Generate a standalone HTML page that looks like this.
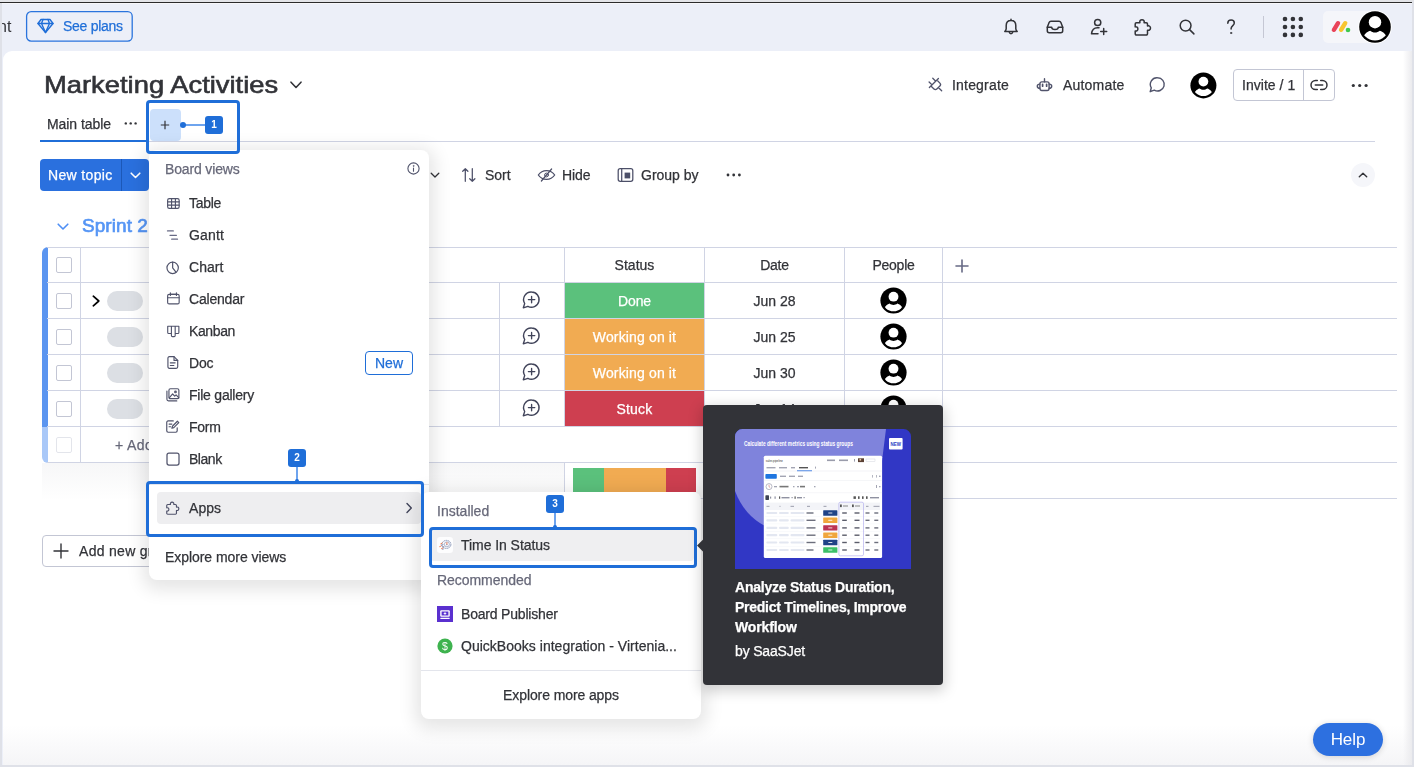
<!DOCTYPE html>
<html lang="en">
<head>
<meta charset="utf-8">
<title>Marketing Activities</title>
<style>
*{box-sizing:border-box;margin:0;padding:0}
html,body{width:1414px;height:767px;overflow:hidden;background:#dfe1e8}
body{position:relative;font-family:"Liberation Sans",sans-serif;font-size:14px;color:#323338;-webkit-font-smoothing:antialiased}
.abs{position:absolute}
.t{position:absolute;white-space:nowrap;line-height:20px;height:20px;will-change:transform;-webkit-text-stroke:.25px currentColor}
svg{position:absolute;overflow:visible}
/* frame */
#topgray{left:0;top:0;width:1414px;height:2px;background:#e3e4e8}
#topdark{left:0;top:2px;width:1412px;height:1px;background:#2b2b2b}
#topwhite{left:2px;top:3px;width:1410px;height:1px;background:#f7f7fa}
#bar{left:2px;top:4px;width:1410px;height:48px;background:#eceff8}
#leftpad{left:2px;top:51px;width:6px;height:714px;background:#eceff8}
#content{left:2.600px;top:51px;width:1409.400px;height:714px;background:#fff;border-top-left-radius:9px;overflow:hidden}
#botfade{left:2.600px;top:725px;width:1409.400px;height:40px;background:linear-gradient(#ffffff00,#f5f5f7)}
#rightfade{left:1403px;top:51px;width:9px;height:714px;background:linear-gradient(90deg,#ffffff00,#ebebee)}
.hl{position:absolute;border:3px solid #1f6ed8;border-radius:4px}
.badge{will-change:transform;position:absolute;background:#1f6ed8;color:#fff;font-weight:bold;font-size:10px;line-height:18px;text-align:center;border-radius:3px;width:18px;height:18px}
.menu{position:absolute;background:#fff;border-radius:8px;box-shadow:0 4px 17px 6px rgba(0,0,0,.1)}
.line{position:absolute;background:#d0d4e4}
</style>
</head>
<body>
<div class="abs" id="topgray"></div>
<div class="abs" id="topdark"></div>
<div class="abs" id="topwhite"></div>
<div class="abs" id="bar"></div>
<div class="abs" id="leftpad"></div>
<div class="abs" id="content"></div>
<div class="abs" id="botfade"></div>
<div class="abs" id="rightfade"></div>

<!-- TOPBAR -->
<div class="t" style="-webkit-text-stroke:0;left:-2.500px;top:17px;font-size:16px;color:#323338">nt</div>
<div class="abs" style="left:0;top:4px;width:2px;height:761px;background:#dfe1e8"></div>
<svg style="left:25px;top:10px" width="109" height="33" viewBox="0 0 109 33" fill="none" stroke="#2a74dd" stroke-width="1.300"><rect x="1.600" y="1.700" width="105.600" height="29.400" rx="4.500"/></svg>
<svg style="left:37px;top:18px" width="17" height="16" viewBox="0 0 17 16" fill="none" stroke="#1f6ed8" stroke-width="1.4" stroke-linejoin="round" stroke-linecap="round"><path d="M4 1.5h9l3 4-7.5 9-7.500-9z"/><path d="M1 5.500h15M6 1.500l-1.500 4 4 9 4-9-1.500-4"/></svg>
<div class="t" id="seeplans" style="left:63px;top:16px;font-size:14px;color:#1f6ed8;letter-spacing:-0.287px">See plans</div>

<svg style="left:1001px;top:17px" width="20" height="20" viewBox="0 0 20 20" fill="none" stroke="#323338" stroke-width="1.5" stroke-linecap="round" stroke-linejoin="round"><path d="M10 2.200v1.200M10 3.400c-3 0-4.800 2.200-4.800 5v3.300c0 1.200-.8 2.100-1.400 2.800h12.400c-.6-.7-1.400-1.600-1.400-2.800V8.400c0-2.800-1.800-5-4.800-5z"/><path d="M8.300 15.200c.2.900.9 1.500 1.700 1.500s1.500-.6 1.700-1.500"/></svg>
<svg style="left:1045px;top:16.5px" width="20" height="20" viewBox="0 0 20 20" fill="none" stroke="#323338" stroke-width="1.5" stroke-linecap="round" stroke-linejoin="round"><path d="M2.300 10.200l1.800-4.700c.3-.8 1-1.300 1.900-1.300h8c.9 0 1.600.5 1.900 1.300l1.800 4.700v3.600c0 1.100-.9 2-2 2H4.300c-1.100 0-2-.9-2-2z"/><path d="M2.300 10.200h4.400c0 1.300 1.500 2.300 3.300 2.300s3.300-1 3.300-2.300h4.400"/></svg>
<svg style="left:1089px;top:16.8px" width="20" height="20" viewBox="0 0 20 20" fill="none" stroke="#323338" stroke-width="1.5" stroke-linecap="round" stroke-linejoin="round"><circle cx="8.700" cy="5.500" r="3.100"/><path d="M10 10.800H8.400c-3.200 0-5.400 2.300-5.900 6h6.500M14.700 11.400v6M11.700 14.400h6"/></svg>
<svg style="left:1133px;top:16.5px" width="20" height="20" viewBox="0 0 20 20" fill="none" stroke="#323338" stroke-width="1.500" stroke-linecap="round" stroke-linejoin="round"><path d="M3.400 5.700H6.900c-.5-1.700.5-3 2.100-3s2.600 1.300 2.100 3H13.300a1.200 1.200 0 0 1 1.200 1.200V9c1.700-.5 3 .5 3 2.100s-1.300 2.600-3 2.100V16.800a1.200 1.200 0 0 1-1.200 1.200H3.400a1.200 1.200 0 0 1-1.200-1.200V13.900c1.500.4 2.700-.5 2.700-2s-1.200-2.400-2.700-2V6.900a1.200 1.200 0 0 1 1.200-1.200z"/></svg>
<svg style="left:1177px;top:16.5px" width="20" height="20" viewBox="0 0 20 20" fill="none" stroke="#323338" stroke-width="1.5" stroke-linecap="round" stroke-linejoin="round"><circle cx="8.600" cy="8.600" r="5.400"/><path d="M12.600 12.600l4.300 4.300"/></svg>
<svg style="left:1221px;top:16.5px" width="20" height="20" viewBox="0 0 20 20" fill="none" stroke="#323338" stroke-width="1.5" stroke-linecap="round" stroke-linejoin="round"><path d="M6.800 6.200c0-1.900 1.400-3.100 3.300-3.100s3.200 1.200 3.200 2.900c0 2.500-3.200 2.700-3.200 5.500v.6"/><circle cx="10.100" cy="16" r=".7" fill="#323338" stroke-width=".6"/></svg>
<div class="abs" style="left:1263px;top:16px;width:1px;height:22px;background:#c5c7d4"></div>
<svg style="left:1282px;top:16px" width="22" height="22" viewBox="0 0 22 22" fill="#323338"><circle cx="3" cy="3" r="2.300"/><circle cx="10.900" cy="3" r="2.300"/><circle cx="18.800" cy="3" r="2.300"/><circle cx="3" cy="11" r="2.300"/><circle cx="10.900" cy="11" r="2.300"/><circle cx="18.800" cy="11" r="2.300"/><circle cx="3" cy="18.900" r="2.300"/><circle cx="10.900" cy="18.900" r="2.300"/><circle cx="18.800" cy="18.900" r="2.300"/></svg>
<div class="abs" style="left:1323px;top:11px;width:60px;height:32px;border-radius:5px;background:#f5f6fa"></div>
<svg style="left:1330px;top:19px" width="22" height="16" viewBox="0 0 22 16" fill="none" stroke-linecap="round"><path d="M3.900 10.800L8 4.200" stroke="#e9445a" stroke-width="4.400"/><path d="M11.100 10.800l4.100-6.600" stroke="#f7c530" stroke-width="4.400"/><circle cx="18" cy="11" r="2.300" fill="#3fc94e"/></svg>
<svg style="left:1358px;top:10px" width="34" height="34" viewBox="0 0 34 34"><circle cx="17" cy="17" r="16.800" fill="#fff"/><circle cx="17" cy="17" r="15.800" fill="#000"/><clipPath id="av1"><circle cx="17" cy="17" r="13.600"/></clipPath><circle cx="17" cy="12.200" r="6.200" fill="#fff"/><path clip-path="url(#av1)" d="M4 34c0-8 4-12 8.200-13.200 1.300 1.200 3 1.800 4.800 1.800s3.500-.6 4.800-1.800C26 22 30 26 30 34z" fill="#fff"/></svg>
<!-- HEADER -->
<div class="t" id="title" style="left:44px;top:67px;font-size:24px;-webkit-text-stroke:.6px #323338;line-height:36px;height:36px;color:#323338;transform:scaleX(1.14);transform-origin:0 0">Marketing Activities</div>
<svg style="left:290px;top:81px" width="12" height="8" viewBox="0 0 12 8" fill="none" stroke="#323338" stroke-width="1.600" stroke-linecap="round" stroke-linejoin="round"><path d="M1 1.200l5 5.300 5-5.300"/></svg>

<svg style="left:926px;top:77px" width="18" height="18" viewBox="0 0 18 18" fill="none" stroke="#50536b" stroke-width="1.300" stroke-linecap="round" stroke-linejoin="round"><g transform="translate(7.900 6.050) rotate(45)"><path d="M0-6.400V6.400M0-4.200H4.300a2 2 0 0 1 2 2V2.200a2 2 0 0 1-2 2H0M0-2.600H-4.200M0 2.600H-4.200M6.300 0H11"/></g></svg>
<div class="t" id="integrate" style="left:952px;top:75px;font-size:14px;letter-spacing:0.193px">Integrate</div>
<svg style="left:1035px;top:77px" width="18" height="16" viewBox="0 0 18 16" fill="none" stroke="#50536b" stroke-width="1.400" stroke-linecap="round" stroke-linejoin="round"><rect x="4.900" y="4.900" width="9.200" height="8.600" rx="1.900"/><path d="M9.500 1.800V4.900M4.900 7.100c-1.600 0-2.600.8-2.600 2.100s1 2.100 2.600 2.100M14.100 7.100c1.600 0 2.600.8 2.600 2.100s-1 2.100-2.600 2.100"/><path d="M7.600 7.400v1.800M11.600 7.400v1.800" stroke-width="1.700"/></svg>
<div class="t" id="automate" style="left:1063px;top:75px;font-size:14px;letter-spacing:0.195px">Automate</div>
<svg style="left:1148px;top:76px" width="18" height="18" viewBox="0 0 18 18" fill="none" stroke="#50536b" stroke-width="1.400" stroke-linecap="round" stroke-linejoin="round"><path d="M9.600 1.800a6.600 6.600 0 1 1-3.300 12.300L2.200 15.700l1.100-3.900A6.600 6.600 0 0 1 9.600 1.800z"/></svg>
<svg style="left:1189.500px;top:71.600px" width="26.800" height="26.800" viewBox="0 0 34 34"><circle cx="17" cy="17" r="16.500" fill="#000"/><clipPath id="av2"><circle cx="17" cy="17" r="13.600"/></clipPath><circle cx="17" cy="12.200" r="6.200" fill="#fff"/><path clip-path="url(#av2)" d="M4 34c0-8 4-12 8.200-13.200 1.300 1.200 3 1.800 4.800 1.800s3.500-.6 4.800-1.800C26 22 30 26 30 34z" fill="#fff"/></svg>
<div class="abs" style="left:1233px;top:69px;width:102px;height:32px;border:1px solid #c3c6d4;border-radius:4px"></div>
<div class="abs" style="left:1303px;top:70px;width:1px;height:30px;background:#c3c6d4"></div>
<div class="t" id="invite" style="left:1242px;top:75px;font-size:14px;letter-spacing:0.038px">Invite / 1</div>
<svg style="left:1310px;top:78px" width="18" height="14" viewBox="0 0 18 14" fill="none" stroke="#323338" stroke-width="1.500" stroke-linecap="round"><path d="M7.300 2.400H5.600a4.600 4.600 0 0 0 0 9.200h1.700M10.700 2.400h1.700a4.600 4.600 0 0 1 0 9.200h-1.700M5.300 7h7.400"/></svg>
<svg style="left:1351px;top:83px" width="18" height="5" viewBox="0 0 18 5" fill="#323338"><circle cx="2.300" cy="2.500" r="1.600"/><circle cx="8.700" cy="2.500" r="1.600"/><circle cx="15.100" cy="2.500" r="1.600"/></svg>

<div class="t" id="maintable" style="left:47px;top:114px;font-size:14px;letter-spacing:-0.069px">Main table</div>
<svg style="left:124px;top:121px" width="14" height="4" viewBox="0 0 14 4" fill="#323338"><circle cx="1.800" cy="2.400" r="1.200"/><circle cx="6.700" cy="2.400" r="1.200"/><circle cx="11.600" cy="2.400" r="1.200"/></svg>
<div class="line" style="left:40px;top:141px;width:1335px;height:1px"></div>
<div class="abs" style="left:40px;top:140px;width:108px;height:2px;background:#1f6ed8"></div>
<div class="abs" style="left:150px;top:109px;width:31px;height:32px;border-radius:4px;background:#cce0fb"></div>
<svg style="left:160px;top:120px" width="10" height="10" viewBox="0 0 10 10" fill="none" stroke="#323338" stroke-width="1.200"><path d="M5 .8v8.400M.8 5h8.400"/></svg>

<div class="abs" style="left:40px;top:159px;width:109px;height:32px;border-radius:4px;background:#2a70de"></div>
<div class="abs" style="left:121px;top:159px;width:1px;height:32px;background:#1c58b8"></div>
<div class="t" id="newtopic" style="left:48px;top:165px;font-size:14px;color:#fff;letter-spacing:0.348px">New topic</div>
<svg style="left:130px;top:172px" width="11" height="7" viewBox="0 0 11 7" fill="none" stroke="#fff" stroke-width="1.600" stroke-linecap="round" stroke-linejoin="round"><path d="M1.200 1.200l4.300 4.300 4.300-4.300"/></svg>

<svg style="left:430px;top:172px" width="10" height="7" viewBox="0 0 10 7" fill="none" stroke="#323338" stroke-width="1.300" stroke-linecap="round" stroke-linejoin="round"><path d="M1.200 1.200L5 5l3.800-3.800"/></svg>
<svg style="left:461px;top:167px" width="16" height="16" viewBox="0 0 16 16" fill="none" stroke="#4c4f68" stroke-width="1.250" stroke-linecap="round" stroke-linejoin="round"><path d="M4.300 14.300V1.700M1.700 4.300l2.600-2.600 2.600 2.600M11.300 1.700v12.600M8.700 11.700l2.600 2.600 2.600-2.600"/></svg>
<div class="t" id="sort" style="left:485px;top:165px;font-size:14px;letter-spacing:-0.047px">Sort</div>
<svg style="left:537px;top:167px" width="19" height="16" viewBox="0 0 19 16" fill="none" stroke="#4c4f68" stroke-width="1.250" stroke-linecap="round" stroke-linejoin="round"><path d="M1.300 8c2-2.900 4.700-4.400 8.200-4.400s6.200 1.500 8.200 4.400c-2 2.900-4.700 4.400-8.200 4.400S3.300 10.900 1.300 8z"/><circle cx="9.500" cy="8" r="1.900" stroke-width="1"/><path d="M14.600 2L4.400 14"/></svg>
<div class="t" id="hide" style="left:562px;top:165px;font-size:14px;letter-spacing:-0.074px">Hide</div>
<svg style="left:617px;top:167px" width="17" height="16" viewBox="0 0 17 16" fill="none" stroke="#4c4f68" stroke-width="1.250" stroke-linejoin="round"><rect x="1.200" y="1.700" width="14.600" height="12.600" rx="2"/><path d="M4.700 1.700v12.600"/><rect x="7.600" y="5.600" width="5.600" height="5.800" fill="#4c4f68" stroke="none"/></svg>
<div class="t" id="groupby" style="left:641px;top:165px;font-size:14px;letter-spacing:-0.012px">Group by</div>
<svg style="left:726px;top:173px" width="16" height="4" viewBox="0 0 16 4" fill="#323338"><circle cx="2" cy="2" r="1.400"/><circle cx="7.700" cy="2" r="1.400"/><circle cx="13.400" cy="2" r="1.400"/></svg>
<div class="abs" style="left:1351px;top:163px;width:24px;height:24px;border-radius:12px;background:#f5f6fa"></div>
<svg style="left:1358px;top:172px" width="10" height="6" viewBox="0 0 10 6" fill="none" stroke="#323338" stroke-width="1.400" stroke-linecap="round" stroke-linejoin="round"><path d="M1.300 4.800L5 1.200l3.700 3.600"/></svg>

<svg style="left:57px;top:223px" width="12" height="8" viewBox="0 0 12 8" fill="none" stroke="#4e8ff5" stroke-width="1.600" stroke-linecap="round" stroke-linejoin="round"><path d="M1.200 1.200L6 6l4.800-4.800"/></svg>
<div class="t" id="sprint" style="left:82px;top:213px;font-size:19px;-webkit-text-stroke:.65px #5595f5;line-height:26px;height:26px;color:#5595f5;letter-spacing:0.064px">Sprint 2</div>
<!-- TABLE -->
<div class="abs" style="left:42px;top:463px;width:522px;height:38px;background:linear-gradient(rgba(40,44,70,.04),rgba(40,44,70,0))"></div>
<div class="abs" style="left:42px;top:247px;width:6px;height:180px;background:#5b95f0;border-top-left-radius:6px"></div>
<div class="abs" style="left:42px;top:427px;width:6px;height:36px;background:#a9c8f8;border-bottom-left-radius:6px"></div>
<div class="line" style="left:47px;top:247px;width:1350px;height:1px"></div>
<div class="line" style="left:47px;top:282px;width:1350px;height:1px"></div>
<div class="line" style="left:47px;top:318px;width:1350px;height:1px"></div>
<div class="line" style="left:47px;top:354px;width:1350px;height:1px"></div>
<div class="line" style="left:47px;top:390px;width:1350px;height:1px"></div>
<div class="line" style="left:47px;top:426px;width:1350px;height:1px"></div>
<div class="line" style="left:47px;top:462px;width:1350px;height:1px"></div>
<div class="line" style="left:564px;top:498px;width:833px;height:1px"></div>
<div class="line" style="left:80px;top:247px;width:1px;height:216px"></div>
<div class="line" style="left:499px;top:283px;width:1px;height:143px"></div>
<div class="line" style="left:564px;top:247px;width:1px;height:179px"></div>
<div class="line" style="left:704px;top:247px;width:1px;height:179px"></div>
<div class="line" style="left:844px;top:247px;width:1px;height:179px"></div>
<div class="line" style="left:942px;top:247px;width:1px;height:179px"></div>
<div class="line" style="left:564px;top:463px;width:1px;height:35px"></div>
<div class="line" style="left:704px;top:463px;width:1px;height:35px"></div>
<div class="abs" style="left:56px;top:257px;width:16px;height:16px;border:1px solid #c3c6d4;border-radius:2px;background:#fff"></div>
<div class="abs" style="left:56px;top:293px;width:16px;height:16px;border:1px solid #c3c6d4;border-radius:2px;background:#fff"></div>
<div class="abs" style="left:56px;top:329px;width:16px;height:16px;border:1px solid #c3c6d4;border-radius:2px;background:#fff"></div>
<div class="abs" style="left:56px;top:365px;width:16px;height:16px;border:1px solid #c3c6d4;border-radius:2px;background:#fff"></div>
<div class="abs" style="left:56px;top:401px;width:16px;height:16px;border:1px solid #c3c6d4;border-radius:2px;background:#fff"></div>
<div class="abs" style="left:56px;top:437px;width:16px;height:16px;border:1px solid #c3c6d4;border-radius:2px;background:#fff;opacity:.45"></div>
<svg style="left:91px;top:295px" width="10" height="12" viewBox="0 0 10 12" fill="none" stroke="#000" stroke-width="1.700" stroke-linecap="round" stroke-linejoin="round"><path d="M2.300 1.200L7.800 6l-5.500 4.800"/></svg>
<div class="abs" style="left:107px;top:291px;width:36px;height:20px;border-radius:10px;background:#dcdfe4"></div>
<div class="abs" style="left:107px;top:327px;width:36px;height:20px;border-radius:10px;background:#dcdfe4"></div>
<div class="abs" style="left:107px;top:363px;width:36px;height:20px;border-radius:10px;background:#dcdfe4"></div>
<div class="abs" style="left:107px;top:399px;width:36px;height:20px;border-radius:10px;background:#dcdfe4"></div>
<div class="t" id="additem" style="left:115px;top:435px;font-size:14px;color:#676879;letter-spacing:0.393px">+ Add topic</div>
<div class="t" id="hstatus" style="left:565px;top:255px;width:139px;text-align:center;letter-spacing:0.016px">Status</div>
<div class="t" id="hdate" style="left:705px;top:255px;width:139px;text-align:center;letter-spacing:-0.220px">Date</div>
<div class="t" id="hpeople" style="left:845px;top:255px;width:97px;text-align:center;letter-spacing:-0.232px">People</div>
<svg style="left:955px;top:259px" width="14" height="14" viewBox="0 0 14 14" fill="none" stroke="#676a85" stroke-width="1.600" stroke-linecap="round"><path d="M7 1v12M1 7h12"/></svg>
<svg style="left:521px;top:290px" width="20" height="20" viewBox="0 0 20 20" fill="none" stroke="#41445a" stroke-width="1.350" stroke-linecap="round" stroke-linejoin="round"><path d="M10.600 2a7.600 7.600 0 1 1-3.700 14.300L2.300 17.800l1.400-4.300A7.600 7.600 0 0 1 10.600 2z"/><path d="M10.600 6.400v6.400M7.400 9.600h6.400"/></svg>
<div class="abs" style="left:565px;top:283px;width:139px;height:35px;background:#5bc17c"></div>
<div class="t" id="st0" style="left:565px;top:291px;width:139px;text-align:center;color:#fff;letter-spacing:-0.167px">Done</div>
<div class="t" id="dt0" style="left:705px;top:291px;width:139px;text-align:center;letter-spacing:0.026px">Jun 28</div>
<svg style="left:880px;top:287px" width="27" height="27" viewBox="0 0 34 34"><circle cx="17" cy="17" r="16.500" fill="#000"/><clipPath id="avr0"><circle cx="17" cy="17" r="13.600"/></clipPath><circle cx="17" cy="12.200" r="6.200" fill="#fff"/><path clip-path="url(#avr0)" d="M4 34c0-8 4-12 8.200-13.200 1.300 1.200 3 1.800 4.800 1.800s3.500-.6 4.800-1.800C26 22 30 26 30 34z" fill="#fff"/></svg>
<svg style="left:521px;top:326px" width="20" height="20" viewBox="0 0 20 20" fill="none" stroke="#41445a" stroke-width="1.350" stroke-linecap="round" stroke-linejoin="round"><path d="M10.600 2a7.600 7.600 0 1 1-3.700 14.300L2.300 17.800l1.400-4.300A7.600 7.600 0 0 1 10.600 2z"/><path d="M10.600 6.400v6.400M7.400 9.600h6.400"/></svg>
<div class="abs" style="left:565px;top:319px;width:139px;height:35px;background:#f1ab52"></div>
<div class="t" id="st1" style="left:565px;top:327px;width:139px;text-align:center;color:#fff;letter-spacing:0.142px">Working on it</div>
<div class="t" id="dt1" style="left:705px;top:327px;width:139px;text-align:center;letter-spacing:0.026px">Jun 25</div>
<svg style="left:880px;top:323px" width="27" height="27" viewBox="0 0 34 34"><circle cx="17" cy="17" r="16.500" fill="#000"/><clipPath id="avr1"><circle cx="17" cy="17" r="13.600"/></clipPath><circle cx="17" cy="12.200" r="6.200" fill="#fff"/><path clip-path="url(#avr1)" d="M4 34c0-8 4-12 8.200-13.200 1.300 1.200 3 1.800 4.800 1.800s3.500-.6 4.800-1.800C26 22 30 26 30 34z" fill="#fff"/></svg>
<svg style="left:521px;top:362px" width="20" height="20" viewBox="0 0 20 20" fill="none" stroke="#41445a" stroke-width="1.350" stroke-linecap="round" stroke-linejoin="round"><path d="M10.600 2a7.600 7.600 0 1 1-3.700 14.300L2.300 17.800l1.400-4.300A7.600 7.600 0 0 1 10.600 2z"/><path d="M10.600 6.400v6.400M7.400 9.600h6.400"/></svg>
<div class="abs" style="left:565px;top:355px;width:139px;height:35px;background:#f1ab52"></div>
<div class="t" id="st2" style="left:565px;top:363px;width:139px;text-align:center;color:#fff;letter-spacing:0.142px">Working on it</div>
<div class="t" id="dt2" style="left:705px;top:363px;width:139px;text-align:center;letter-spacing:0.026px">Jun 30</div>
<svg style="left:880px;top:359px" width="27" height="27" viewBox="0 0 34 34"><circle cx="17" cy="17" r="16.500" fill="#000"/><clipPath id="avr2"><circle cx="17" cy="17" r="13.600"/></clipPath><circle cx="17" cy="12.200" r="6.200" fill="#fff"/><path clip-path="url(#avr2)" d="M4 34c0-8 4-12 8.200-13.200 1.300 1.200 3 1.800 4.800 1.800s3.500-.6 4.800-1.800C26 22 30 26 30 34z" fill="#fff"/></svg>
<svg style="left:521px;top:398px" width="20" height="20" viewBox="0 0 20 20" fill="none" stroke="#41445a" stroke-width="1.350" stroke-linecap="round" stroke-linejoin="round"><path d="M10.600 2a7.600 7.600 0 1 1-3.700 14.300L2.300 17.800l1.400-4.300A7.600 7.600 0 0 1 10.600 2z"/><path d="M10.600 6.400v6.400M7.400 9.600h6.400"/></svg>
<div class="abs" style="left:565px;top:391px;width:139px;height:35px;background:#ce3f50"></div>
<div class="t" id="st3" style="left:565px;top:399px;width:139px;text-align:center;color:#fff;letter-spacing:0.197px">Stuck</div>
<div class="t" id="dt3" style="left:705px;top:399px;width:139px;text-align:center;letter-spacing:0.026px">Jun 14</div>
<svg style="left:880px;top:395px" width="27" height="27" viewBox="0 0 34 34"><circle cx="17" cy="17" r="16.500" fill="#000"/><clipPath id="avr3"><circle cx="17" cy="17" r="13.600"/></clipPath><circle cx="17" cy="12.200" r="6.200" fill="#fff"/><path clip-path="url(#avr3)" d="M4 34c0-8 4-12 8.200-13.200 1.300 1.200 3 1.800 4.800 1.800s3.500-.6 4.800-1.800C26 22 30 26 30 34z" fill="#fff"/></svg>
<div class="abs" style="left:573px;top:468px;width:31px;height:24px;background:#5bc17c"></div>
<div class="abs" style="left:604px;top:468px;width:62px;height:24px;background:#f1ab52"></div>
<div class="abs" style="left:666px;top:468px;width:30px;height:24px;background:#ce3f50"></div>
<div class="abs" style="left:42px;top:535px;width:140px;height:32px;border:1px solid #c3c6d4;border-radius:4px"></div>
<svg style="left:52.800px;top:543px" width="16" height="16" viewBox="0 0 16 16" fill="none" stroke="#323338" stroke-width="1.400" stroke-linecap="round"><path d="M8 1v14M1 8h14"/></svg>
<div class="t" id="addgroup" style="left:79px;top:541px;font-size:14px;letter-spacing:0.293px">Add new group</div>
<!-- MENUS -->
<div class="menu" style="left:149px;top:150px;width:280px;height:430px"></div>
<div class="t" id="boardviews" style="left:165px;top:159px;font-size:14px;color:#676879;letter-spacing:-0.151px">Board views</div>
<svg style="left:406.700px;top:162px" width="13" height="13" viewBox="0 0 13 13" fill="none" stroke="#50536b" stroke-width="1.100" stroke-linecap="round"><circle cx="6.500" cy="6.500" r="5.600"/><path d="M6.500 6v3.200"/><circle cx="6.500" cy="3.900" r=".5" fill="#50536b" stroke-width=".5"/></svg>
<svg style="left:166.600px;top:197.600px" width="12.800" height="11" viewBox="0 0 14 12" fill="none" stroke="#50536b" stroke-width="1.250" stroke-linecap="round" stroke-linejoin="round"><rect x=".7" y=".7" width="12.600" height="10.600" rx="1.800"/><path d="M.7 4.200h12.600M.7 7.800h12.600M5 .7v10.600M9.200 .7v10.600"/></svg>
<div class="t" id="mi_table" style="left:189px;top:193px;font-size:14px;letter-spacing:-0.294px">Table</div>
<svg style="left:166px;top:229px" width="14" height="12" viewBox="0 0 14 12" fill="none" stroke="#676a85" stroke-width="1.300" stroke-linecap="round"><path d="M1.500 1.900h5.800M4 6.300h6.400M5.700 10.200h5.800"/></svg>
<div class="t" id="mi_gantt" style="left:189px;top:225px;font-size:14px;letter-spacing:0.150px">Gantt</div>
<svg style="left:166.300px;top:260.500px" width="13.300" height="13.300" viewBox="0 0 14 14" fill="none" stroke="#50536b" stroke-width="1.250" stroke-linecap="round" stroke-linejoin="round"><circle cx="7" cy="7.200" r="6"/><path d="M7 1.200v6l3.500 4.600"/></svg>
<div class="t" id="mi_chart" style="left:189px;top:257px;font-size:14px;letter-spacing:0.033px">Chart</div>
<svg style="left:166.600px;top:292px" width="12.800" height="12.800" viewBox="0 0 14 14" fill="none" stroke="#50536b" stroke-width="1.250" stroke-linecap="round" stroke-linejoin="round"><rect x=".7" y="2.600" width="12.600" height="10.400" rx="1.600"/><path d="M.7 6.300h12.600M3.700 .8v3M10.300 .8v3M3.700 2.600h6.600"/></svg>
<div class="t" id="mi_calendar" style="left:189px;top:289px;font-size:14px;letter-spacing:-0.191px">Calendar</div>
<svg style="left:166.600px;top:324.600px" width="12.600" height="12.600" viewBox="0 0 14 14" fill="none" stroke="#50536b" stroke-width="1.250" stroke-linecap="round" stroke-linejoin="round"><path d="M.8 1.400h12.400v6.900c0 .7-.5 1.200-1.200 1.200H9.100V1.400M4.900 1.400v8.100H2c-.7 0-1.200-.5-1.200-1.200V1.400M4.900 9.500v2.200c0 .7.500 1.200 1.200 1.200h1.800c.7 0 1.200-.5 1.200-1.200V9.500"/></svg>
<div class="t" id="mi_kanban" style="left:189px;top:321px;font-size:14px;letter-spacing:-0.380px">Kanban</div>
<svg style="left:167px;top:356.400px" width="12" height="13" viewBox="0 0 13 14" fill="none" stroke="#50536b" stroke-width="1.250" stroke-linecap="round" stroke-linejoin="round"><path d="M2.600 .7h5l4 4v7c0 .9-.6 1.600-1.600 1.600H2.600C1.600 13.300 1 12.600 1 11.700V2.300C1 1.400 1.600 .7 2.600 .7z"/><path d="M7.600 .7v4h4M3.600 7.400h5.200M3.600 10.200h3.800"/></svg>
<div class="t" id="mi_doc" style="left:189px;top:353px;font-size:14px;letter-spacing:-0.169px">Doc</div>
<svg style="left:166.200px;top:388px" width="13.800" height="13.800" viewBox="0 0 15 15" fill="none" stroke="#50536b" stroke-width="1.250" stroke-linecap="round" stroke-linejoin="round"><rect x="3.200" y=".8" width="10.800" height="10.800" rx="1.600"/><path d="M1 3.300v9c0 1 .7 1.700 1.700 1.700h9M3.500 10.800l3.700-4.300 2.300 2.400 1.500-1.400 3 3.200"/><circle cx="10.300" cy="4.300" r=".9"/></svg>
<div class="t" id="mi_file" style="left:189px;top:385px;font-size:14px;letter-spacing:-0.225px">File gallery</div>
<svg style="left:166.400px;top:420px" width="14" height="13.100" viewBox="0 0 15 14" fill="none" stroke="#50536b" stroke-width="1.250" stroke-linecap="round" stroke-linejoin="round"><path d="M12 8.300v3.300c0 .9-.6 1.500-1.500 1.500H2.300c-.9 0-1.500-.6-1.500-1.500V2.500C.8 1.600 1.400 1 2.300 1h5.500M3.300 4.400h3M3.300 7.200h1.600"/><path d="M12.200 1.300l1.500 1.500-5.300 5.400-2.100.6.600-2.100z"/></svg>
<div class="t" id="mi_form" style="left:189px;top:417px;font-size:14px;letter-spacing:-0.268px">Form</div>
<svg style="left:166px;top:452px" width="14" height="14" viewBox="0 0 14 14" fill="none" stroke="#50536b" stroke-width="1.250" stroke-linecap="round" stroke-linejoin="round"><rect x="1" y="1" width="12" height="12" rx="2"/></svg>
<div class="t" id="mi_blank" style="left:189px;top:449px;font-size:14px;letter-spacing:-0.466px">Blank</div>
<div class="abs" style="left:365px;top:351px;width:48px;height:24px;border:1px solid #1f6ed8;border-radius:4px"></div>
<div class="t" id="newbadge" style="left:365px;top:353px;width:48px;text-align:center;font-size:14px;color:#1f6ed8;letter-spacing:-0.005px">New</div>
<div class="abs" style="left:149px;top:484px;width:280px;height:1px;background:#e3e5ec"></div>
<div class="abs" style="left:157px;top:492px;width:264px;height:32px;border-radius:4px;background:#eeeef0"></div>
<svg style="left:164.800px;top:500.400px" width="15.800" height="15.800" viewBox="0 0 20 20" fill="none" stroke="#50536b" stroke-width="1.450" stroke-linecap="round" stroke-linejoin="round"><path d="M3.400 5.700H6.900c-.5-1.700.5-3 2.100-3s2.600 1.300 2.100 3H13.300a1.200 1.200 0 0 1 1.200 1.200V9c1.700-.5 3 .5 3 2.100s-1.300 2.600-3 2.100V16.800a1.200 1.200 0 0 1-1.200 1.200H3.400a1.200 1.200 0 0 1-1.200-1.200V13.900c1.500.4 2.700-.5 2.700-2s-1.200-2.400-2.700-2V6.900a1.200 1.200 0 0 1 1.200-1.200z"/></svg>
<div class="t" id="apps" style="left:189px;top:498px;font-size:14px;letter-spacing:0.045px">Apps</div>
<svg style="left:405px;top:502px" width="8" height="12" viewBox="0 0 8 12" fill="none" stroke="#41445a" stroke-width="1.400" stroke-linecap="round" stroke-linejoin="round"><path d="M2 1.500L6.300 6 2 10.500"/></svg>
<div class="t" id="exploreviews" style="left:165px;top:547px;font-size:14px;letter-spacing:-0.053px">Explore more views</div>
<div class="menu" style="left:421px;top:492px;width:280px;height:227px"></div>
<div class="t" id="installed" style="left:437px;top:501px;font-size:14px;color:#676879;letter-spacing:0.005px">Installed</div>
<div class="abs" style="left:430px;top:529px;width:263.500px;height:32px;border-radius:4px;background:#efeff1"></div>
<svg style="left:437px;top:537px" width="16" height="16" viewBox="0 0 16 16" fill="none"><rect width="16" height="16" rx="3.200" fill="#fdfdfe"/><ellipse cx="9.400" cy="7.400" rx="4.500" ry="4" stroke="#7d8bb0" stroke-width=".9" stroke-dasharray="1.600 .5"/><circle cx="9.900" cy="7.300" r="2.500" fill="#fff" stroke="#8d99ba" stroke-width=".7"/><path d="M9.900 5.600v1.900" stroke="#e8683f" stroke-width=".9" stroke-linecap="round"/><circle cx="9.900" cy="7.700" r=".55" fill="#4f6fb0"/><path d="M3.800 6.800l1.300-.7M2.700 9.600l1.400-.6M4.600 11.500l1.400-.5" stroke="#f0703f" stroke-width=".9" stroke-linecap="round"/><path d="M4.400 8.300l1.800-.8M5.600 10l1.500-.6M5.300 12.300l1.200-.3" stroke="#7d8bb0" stroke-width=".8" stroke-linecap="round"/></svg>
<svg style="left:437px;top:606px" width="16" height="16" viewBox="0 0 16 16" fill="none"><rect width="16" height="16" fill="#5a30cf"/><rect x="3.200" y="4.200" width="9.600" height="6.600" rx="1" fill="#fff"/><rect x="4.600" y="5.500" width="6.800" height="4" fill="#5a30cf"/><path d="M8 6.200v2.600M6.700 7.500h2.600" stroke="#fff" stroke-width=".9"/><path d="M3.800 12.300h8.400" stroke="#fff" stroke-width="1.200" stroke-linecap="round"/></svg>
<svg style="left:437px;top:638px" width="16" height="16" viewBox="0 0 16 16"><circle cx="8" cy="8" r="7.600" fill="#3eb34f"/><text x="8" y="11.600" font-family="Liberation Sans, sans-serif" font-size="10.500" fill="#fff" text-anchor="middle">$</text></svg>
<div class="t" id="tis" style="left:461px;top:535px;font-size:14px;letter-spacing:-0.054px">Time In Status</div>
<div class="t" id="recommended" style="left:437px;top:570px;font-size:14px;color:#676879;letter-spacing:-0.049px">Recommended</div>
<div class="t" id="boardpub" style="left:461px;top:604px;font-size:14px;letter-spacing:-0.195px">Board Publisher</div>
<div class="t" id="qb" style="left:461px;top:636px;font-size:14px;letter-spacing:0.017px">QuickBooks integration - Virtenia...</div>
<div class="abs" style="left:421px;top:670px;width:280px;height:1px;background:#e3e5ec"></div>
<div class="t" id="exploreapps" style="left:421px;top:685px;width:280px;text-align:center;font-size:14px;letter-spacing:-0.101px">Explore more apps</div>
<div class="hl" style="left:146px;top:100px;width:94px;height:53.500px"></div>
<div class="abs" style="left:183px;top:124px;width:23px;height:1.500px;background:#6ea4ee"></div>
<div class="abs" style="left:180.400px;top:122px;width:5.600px;height:5.600px;border-radius:3px;background:#1f6ed8"></div>
<div class="badge" style="left:205px;top:116px">1</div>
<div class="hl" style="left:146px;top:481px;width:278px;height:56px"></div>
<div class="abs" style="left:296.300px;top:466px;width:1.500px;height:15px;background:#6ea4ee"></div>
<div class="abs" style="left:294.600px;top:478.800px;width:4.800px;height:4.800px;border-radius:3px;background:#1f6ed8"></div>
<div class="badge" style="left:288px;top:449px">2</div>
<div class="hl" style="left:429px;top:527px;width:268px;height:41px"></div>
<div class="abs" style="left:554.300px;top:513px;width:1.500px;height:14px;background:#6ea4ee"></div>
<div class="abs" style="left:552.600px;top:524.800px;width:4.800px;height:4.800px;border-radius:3px;background:#1f6ed8"></div>
<div class="badge" style="left:546px;top:495px">3</div>
<!-- TOOLTIP -->
<div class="abs" style="left:703px;top:405px;width:240px;height:280px;border-radius:4px;background:#323338;box-shadow:0 4px 14px 2px rgba(0,0,0,.18)"></div>
<div class="abs" style="left:698.700px;top:540.900px;width:8.800px;height:8.800px;background:#323338;transform:rotate(45deg)"></div>
<svg style="left:735px;top:429px" width="176" height="140" viewBox="0 0 176 140" font-family="Liberation Sans, sans-serif"><defs><clipPath id="imgc"><path d="M0 140V7.500A7.500 7.500 0 0 1 7.500 0h161a7.500 7.500 0 0 1 7.500 7.500V140z"/></clipPath></defs><g clip-path="url(#imgc)"><rect width="176" height="140" fill="#3137c5"/><path d="M0 0h151l-5 40-60 40-56 17Q9 86 0 62z" fill="#7f83dc"/><rect x="28.800" y="26.700" width="118.300" height="102.300" rx="1.500" fill="#fff"/><text x="9" y="17.200" font-size="7.600" font-weight="bold" fill="#fff" textLength="109" lengthAdjust="spacingAndGlyphs">Calculate different metrics using status groups</text><rect x="154" y="9" width="13.600" height="11.400" rx="1" fill="#fff"/><text x="155.600" y="16.900" font-size="5.400" font-weight="bold" fill="#2c3cc4" textLength="10.400" lengthAdjust="spacingAndGlyphs">NEW</text><text x="30.800" y="32.900" font-size="3.800" fill="#333" textLength="17" lengthAdjust="spacingAndGlyphs">sales pipeline</text><g fill="#9a9cab"><rect x="92" y="30.500" width="8" height="1.600"/><rect x="104" y="30.500" width="9" height="1.600"/><rect x="119" y="30" width="1" height="2.600"/><rect x="131" y="30" width="9" height="2.400" fill="none" stroke="#c8cad4" stroke-width=".4"/></g><rect x="123" y="29.300" width="6" height="3.800" fill="#5a4034"/><rect x="124.500" y="29.800" width="1.600" height="1.800" fill="#e8c7a8"/><g fill="#a3a5b3"><rect x="31.500" y="38" width="9" height="1.400"/><rect x="44" y="38" width="8" height="1.400"/><rect x="56" y="38" width="4" height="1.400"/><rect x="64" y="38" width="9" height="1.400" fill="#555"/><rect x="80" y="37.600" width="1" height="2"/></g><rect x="28.800" y="41.800" width="118.300" height=".4" fill="#dfe1e8"/><rect x="62" y="41.400" width="15" height=".8" fill="#2a70de"/><rect x="30.400" y="45" width="11.400" height="4.800" rx=".8" fill="#1f76e0"/><g fill="#a3a5b3"><rect x="45" y="46.600" width="6" height="1.400"/><rect x="54" y="46.600" width="6" height="1.400"/><rect x="63" y="46.600" width="5" height="1.400"/><rect x="137" y="46" width=".8" height="2.600"/><rect x="141" y="46" width=".8" height="2.600"/><rect x="144" y="46.600" width="1.500" height="1.400"/></g><rect x="28.800" y="51.600" width="118.300" height=".4" fill="#e6e8ee"/><circle cx="34" cy="57.600" r="3" fill="#fff" stroke="#8a8ca0" stroke-width=".6"/><path d="M34 55.800v1.900l1.200 .9" fill="none" stroke="#c0504d" stroke-width=".5"/><g fill="#a3a5b3"><rect x="39" y="57" width="3" height="1.300"/><rect x="44.500" y="56.800" width="9" height="1.600" fill="#777"/><rect x="58" y="57" width="1.500" height="1.300"/><rect x="62" y="57" width="2" height="1.300"/><rect x="65" y="56.800" width="5" height="1.600" fill="#777"/><rect x="79" y="57" width="1.500" height="1.300"/><rect x="141" y="56" width="1" height="3"/><rect x="144" y="57" width="1.500" height="1.300"/></g><rect x="28.800" y="63.700" width="118.300" height=".4" fill="#e6e8ee"/><rect x="30.400" y="66.300" width="3.600" height="4.600" rx=".6" fill="#3d4254"/><g fill="#8f91a1"><rect x="35" y="67.600" width="1.200" height="2"/><rect x="39.500" y="67.400" width="1.200" height="2.400"/><rect x="44" y="67.400" width="1.200" height="2.400" fill="#555"/><rect x="46.500" y="68" width="8" height="1.400"/><rect x="56.500" y="68" width="1.200" height="1.200"/><rect x="59.500" y="67.400" width="1.200" height="2.400" fill="#555"/><rect x="62" y="68" width="5" height="1.400"/><rect x="68.500" y="68" width="1.200" height="1.200"/><rect x="118.500" y="67.300" width="2.400" height="2.600" fill="#555"/><rect x="123" y="67.300" width="1.600" height="2.600" fill="#555"/><rect x="127" y="67.300" width="1.600" height="2.600" fill="#555"/><rect x="131" y="67.300" width="1.600" height="2.600" fill="#555"/><rect x="135" y="68" width="9" height="1.400"/></g><rect x="30" y="73.600" width="115" height="7.400" fill="#f3f4f8"/><g fill="#a9abb8"><rect x="31.500" y="76.800" width="3" height="1.200"/><rect x="44.500" y="76.800" width="1" height="1.200"/><rect x="55.500" y="76.800" width="3.500" height="1.200"/><rect x="72" y="76.800" width="3" height="1.200"/><rect x="88.500" y="76.800" width="3" height="1.200"/><rect x="131" y="76.800" width="2.500" height="1.200"/><rect x="138.500" y="76.800" width="6" height="1.200"/></g><g fill="#e3e7f1"><rect x="31.300" y="82.9" width="11" height="2.200" rx="1"/><rect x="44" y="82.9" width="9.800" height="2.200" rx="1"/><rect x="55.500" y="82.9" width="14" height="2.200" rx="1"/></g><rect x="71.500" y="83.3" width="7" height="1.400" fill="#6c6e7c"/><rect x="88.200" y="81.3" width="14.200" height="5.400" rx=".5" fill="#1f4287"/><rect x="93.300" y="83.5" width="4" height="1" fill="#ffffffcc"/><rect x="107.200" y="83.3" width="4.600" height="1.400" fill="#5a5c6a"/><rect x="119.500" y="83.3" width="5" height="1.400" fill="#5a5c6a"/><rect x="130.500" y="83.3" width="4" height="1.400" fill="#6c6e7c"/><rect x="139.300" y="83.3" width="4" height="1.400" fill="#6c6e7c"/><rect x="30" y="87.5" width="115" height=".3" fill="#eceef3"/><g fill="#e3e7f1"><rect x="31.300" y="90.2" width="11" height="2.200" rx="1"/><rect x="44" y="90.2" width="9.800" height="2.200" rx="1"/><rect x="55.500" y="90.2" width="14" height="2.200" rx="1"/></g><rect x="71.500" y="90.6" width="9" height="1.400" fill="#6c6e7c"/><rect x="88.200" y="88.6" width="14.200" height="5.400" rx=".5" fill="#f0a63d"/><rect x="93.300" y="90.8" width="4" height="1" fill="#ffffffcc"/><rect x="107.200" y="90.6" width="4.600" height="1.400" fill="#5a5c6a"/><rect x="119.500" y="90.6" width="5" height="1.400" fill="#5a5c6a"/><rect x="130.500" y="90.6" width="4" height="1.400" fill="#6c6e7c"/><rect x="139.300" y="90.6" width="4" height="1.400" fill="#6c6e7c"/><rect x="30" y="94.8" width="115" height=".3" fill="#eceef3"/><g fill="#e3e7f1"><rect x="31.300" y="97.8" width="11" height="2.200" rx="1"/><rect x="44" y="97.8" width="9.800" height="2.200" rx="1"/><rect x="55.500" y="97.8" width="14" height="2.200" rx="1"/></g><rect x="71.500" y="98.2" width="9" height="1.400" fill="#6c6e7c"/><rect x="88.200" y="96.2" width="14.200" height="5.400" rx=".5" fill="#bb3354"/><rect x="93.300" y="98.4" width="4" height="1" fill="#ffffffcc"/><rect x="107.200" y="98.2" width="4.600" height="1.400" fill="#5a5c6a"/><rect x="119.500" y="98.2" width="5" height="1.400" fill="#5a5c6a"/><rect x="130.500" y="98.2" width="4" height="1.400" fill="#6c6e7c"/><rect x="139.300" y="98.2" width="4" height="1.400" fill="#6c6e7c"/><rect x="30" y="102.4" width="115" height=".3" fill="#eceef3"/><g fill="#e3e7f1"><rect x="31.300" y="105.1" width="11" height="2.200" rx="1"/><rect x="44" y="105.1" width="9.800" height="2.200" rx="1"/><rect x="55.500" y="105.1" width="14" height="2.200" rx="1"/></g><rect x="71.500" y="105.5" width="9" height="1.400" fill="#6c6e7c"/><rect x="88.200" y="103.5" width="14.200" height="5.400" rx=".5" fill="#f0a63d"/><rect x="93.300" y="105.7" width="4" height="1" fill="#ffffffcc"/><rect x="107.200" y="105.5" width="4.600" height="1.400" fill="#5a5c6a"/><rect x="119.500" y="105.5" width="5" height="1.400" fill="#5a5c6a"/><rect x="130.500" y="105.5" width="4" height="1.400" fill="#6c6e7c"/><rect x="139.300" y="105.5" width="4" height="1.400" fill="#6c6e7c"/><rect x="30" y="109.7" width="115" height=".3" fill="#eceef3"/><g fill="#e3e7f1"><rect x="31.300" y="112.4" width="11" height="2.200" rx="1"/><rect x="44" y="112.4" width="9.800" height="2.200" rx="1"/><rect x="55.500" y="112.4" width="14" height="2.200" rx="1"/></g><rect x="71.500" y="112.8" width="9" height="1.400" fill="#6c6e7c"/><rect x="88.200" y="110.8" width="14.200" height="5.400" rx=".5" fill="#1f4287"/><rect x="93.300" y="113.0" width="4" height="1" fill="#ffffffcc"/><rect x="107.200" y="112.8" width="4.600" height="1.400" fill="#5a5c6a"/><rect x="119.500" y="112.8" width="5" height="1.400" fill="#5a5c6a"/><rect x="130.500" y="112.8" width="4" height="1.400" fill="#6c6e7c"/><rect x="139.300" y="112.8" width="4" height="1.400" fill="#6c6e7c"/><rect x="30" y="117.0" width="115" height=".3" fill="#eceef3"/><g fill="#e3e7f1"><rect x="31.300" y="119.9" width="11" height="2.200" rx="1"/><rect x="44" y="119.9" width="9.800" height="2.200" rx="1"/><rect x="55.500" y="119.9" width="14" height="2.200" rx="1"/></g><rect x="71.500" y="120.3" width="7" height="1.400" fill="#6c6e7c"/><rect x="88.200" y="118.3" width="14.200" height="5.400" rx=".5" fill="#3cc068"/><rect x="93.300" y="120.5" width="4" height="1" fill="#ffffffcc"/><rect x="107.200" y="120.3" width="4.600" height="1.400" fill="#5a5c6a"/><rect x="119.500" y="120.3" width="5" height="1.400" fill="#5a5c6a"/><rect x="130.500" y="120.3" width="4" height="1.400" fill="#6c6e7c"/><rect x="139.300" y="120.3" width="4" height="1.400" fill="#6c6e7c"/><rect x="103.900" y="73.200" width="24.600" height="53.600" rx="1.500" fill="none" stroke="#a9a4ec" stroke-width=".6"/><rect x="105" y="75.500" width="1.800" height="2.600" fill="#555"/><rect x="108" y="76.400" width="5" height="1.200" fill="#999"/><rect x="117" y="75.500" width="1.800" height="2.600" fill="#555"/><rect x="120" y="76.400" width="5" height="1.200" fill="#999"/></g></svg>
<div class="t" id="tt1" style="left:735px;top:577px;font-size:14px;font-weight:bold;color:#fff;letter-spacing:-0.230px">Analyze Status Duration,</div>
<div class="t" id="tt2" style="left:735px;top:597px;font-size:14px;font-weight:bold;color:#fff;letter-spacing:-0.251px">Predict Timelines, Improve</div>
<div class="t" id="tt3" style="left:735px;top:617px;font-size:14px;font-weight:bold;color:#fff;letter-spacing:-0.119px">Workflow</div>
<div class="t" id="tt4" style="left:735px;top:641px;font-size:14px;color:#fff;letter-spacing:-0.161px">by SaaSJet</div>
<!-- HELP -->
<div class="abs" style="left:1313px;top:723px;width:70px;height:33px;border-radius:17px;background:#2d70e0;box-shadow:0 1px 6px rgba(0,0,0,.16)"></div>
<div class="t" id="help" style="-webkit-text-stroke:0;left:1313px;top:730px;width:70px;text-align:center;font-size:17px;color:#fff;letter-spacing:-0.092px">Help</div>
</body>
</html>
